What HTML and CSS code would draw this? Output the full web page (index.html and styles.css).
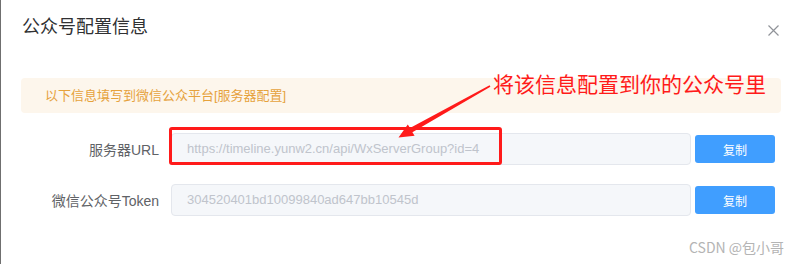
FILE: index.html
```html
<!DOCTYPE html>
<html lang="zh-CN">
<head>
<meta charset="utf-8">
<title>公众号配置信息</title>
<link rel="stylesheet" href="styles.css">
</head>
<body>
<div class="dialog">
  <div class="dialog-header">
    <span class="dialog-title">公众号配置信息</span>
    <span class="dialog-close" aria-label="关闭">
      <svg width="11" height="11" viewBox="0 0 11 11"><path d="M0.5 0.5 L10.5 10.5 M10.5 0.5 L0.5 10.5" stroke="#909399" stroke-width="1.2" fill="none"/></svg>
    </span>
  </div>
  <div class="dialog-body">
    <div class="alert">以下信息填写到微信公众平台[服务器配置]</div>
    <div class="form">
      <div class="form-row">
        <label class="form-label">服务器URL</label>
        <div class="input">https://timeline.yunw2.cn/api/WxServerGroup?id=4</div>
        <button class="btn">复制</button>
      </div>
      <div class="form-row">
        <label class="form-label">微信公众号Token</label>
        <div class="input">304520401bd10099840ad647bb10545d</div>
        <button class="btn">复制</button>
      </div>
    </div>
  </div>
  <div class="mark-box"></div>
  <svg class="mark-arrow" width="801" height="264" viewBox="0 0 801 264">
    <polygon fill="#ff1a1a" points="489.6,85.3 490.4,86.7 412.4,132.2 414.6,135.8 398.5,137.5 407.8,124.4 410.0,128.0"/>
  </svg>
  <div class="mark-text">将该信息配置到你的公众号里</div>
  <div class="watermark">CSDN @包小哥</div>
</div>
</body>
</html>
```

FILE: styles.css
```css
html, body {
  margin: 0;
  padding: 0;
  background: #ffffff;
}
body {
  width: 801px;
  height: 264px;
  overflow: hidden;
  font-family: "Liberation Sans", "Noto Sans CJK SC", sans-serif;
}
.dialog {
  position: relative;
  width: 800px;
  height: 264px;
  border-left: 1px solid #6f6f6f;
  background: #ffffff;
}
.dialog-header {
  display: flex;
  align-items: center;
  justify-content: space-between;
  padding: 15px 22px 0 21px;
  height: 24px;
}
.dialog-title {
  font-size: 18px;
  line-height: 24px;
  color: #303133;
}
.dialog-close {
  display: flex;
  margin-top: 6px;
}
.dialog-body {
  padding: 39px 20px 0 20px;
}
.alert {
  background: #fdf6ec;
  color: #e6a23c;
  font-size: 13px;
  line-height: 19px;
  padding: 8px 24px;
  border-radius: 4px;
}
.form {
  display: flex;
  flex-direction: column;
  gap: 19px;
  padding-top: 20px;
}
.form-row {
  display: flex;
  align-items: center;
  height: 32px;
}
.form-label {
  width: 138px;
  padding-right: 12px;
  text-align: right;
  font-size: 14px;
  color: #606266;
  flex: none;
}
.input {
  box-sizing: border-box;
  width: 520px;
  height: 32px;
  flex: none;
  background: #f5f7fa;
  border: 1px solid #e4e7ed;
  border-radius: 4px;
  color: #c0c4cc;
  font-size: 13px;
  line-height: 30px;
  padding-left: 15px;
  white-space: nowrap;
  overflow: hidden;
}
.btn {
  margin-left: 4px;
  width: 80px;
  height: 28px;
  border: none;
  border-radius: 3px;
  background: #409eff;
  color: #ffffff;
  font-family: "Noto Sans CJK SC", sans-serif;
  font-size: 12px;
  padding: 0;
}
.mark-box {
  position: absolute;
  left: 168px;
  top: 127px;
  width: 327px;
  height: 32px;
  border: 3px solid #ff1a1a;
  border-radius: 3px;
}
.mark-arrow {
  position: absolute;
  left: -1px;
  top: 0;
}
.mark-text {
  position: absolute;
  left: 492px;
  top: 71px;
  font-family: "Noto Sans CJK SC", sans-serif;
  font-size: 21px;
  line-height: 24px;
  color: #ff1a1a;
  white-space: nowrap;
}
.watermark {
  position: absolute;
  left: 688px;
  top: 237px;
  font-family: "Noto Sans CJK SC", sans-serif;
  font-size: 14px;
  line-height: 20px;
  color: #b4b4b4;
  white-space: nowrap;
}
```
